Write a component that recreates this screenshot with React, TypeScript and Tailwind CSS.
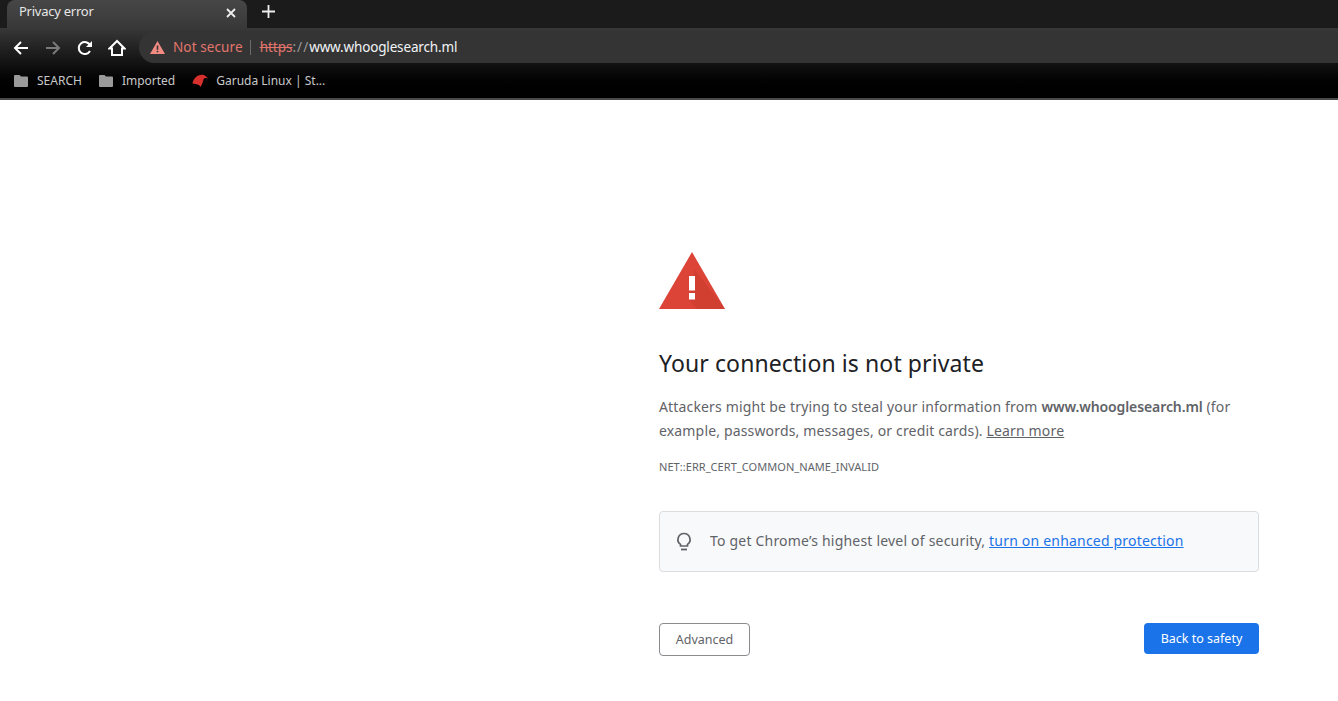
const font = "[font-family:'Noto_Sans',sans-serif]";

const Folder = () => (
  <svg width="16" height="16" viewBox="0 0 16 16" className="shrink-0">
    <path d="M2 2h4.500L8 3.500h6a1 1 0 0 1 1 1V13a1 1 0 0 1-1 1H2a1 1 0 0 1-1-1V3a1 1 0 0 1 1-1z" fill="#9a9a9a" />
  </svg>
);

const Garuda = () => (
  <svg width="16" height="14" viewBox="0 0 16 14" className="shrink-0">
    <path d="M0.500 9.500C1 6 3.500 2.500 7 1.200 9.500.3 12 .6 13.500 2L16 4.300l-2.600-.3c-1.100 0-1.600.6-1.900 1.600-.4 2.400-1.500 4.800-3 7.400-.5-1-1-1.700-1.800-2-2-.9-4-1.300-6.200-1.500z" fill="#d8302c" />
  </svg>
);

const Warning = () => (
  <svg width="66" height="57" viewBox="0 0 66 57">
    <path d="M33 0l33 57H0z" fill="#db4437" />
    <path d="M36 18l30 39H38L30 48z" fill="#c53929" opacity="0.45" />
    <path d="M30 24h6v14.500h-6zM30 41h6v6.500h-6z" fill="#ffffff" />
  </svg>
);

export default function App() {
  return (
    <div className={`${font} w-[1338px] h-[701px] overflow-hidden bg-white`}>
      <div className="h-[28px] bg-[#1b1b1b] flex items-end pl-[7px]">
        <div className="w-[240px] h-[28px] pb-[2px] rounded-t-[8px] bg-gradient-to-b from-[#474747] to-[#383838] flex items-center pl-[12px] pr-[11px] justify-between">
          <span className="mb-[2px] text-[13px] text-[#e6e6e6] tracking-[-0.25px]">Privacy error</span>
          <svg width="10" height="10" viewBox="0 0 10 10">
            <path d="M1 1l8 8M9 1L1 9" stroke="#eeeeee" strokeWidth="1.800" />
          </svg>
        </div>
        <div className="ml-[15px] mb-[10px]">
          <svg width="13" height="13" viewBox="0 0 13 13">
            <path d="M6.500 0v13M0 6.500h13" stroke="#eeeeee" strokeWidth="1.800" />
          </svg>
        </div>
      </div>
      <div className="h-[72px] bg-gradient-to-b from-[#383838] via-[#0c0c0c] via-[60%] to-black border-b-2 border-[#4a4a4a]">
        <div className="h-[37px] pt-[2px] flex items-center pl-[13px]">
          <svg width="16" height="16" viewBox="0 0 16 16">
            <path d="M15 8H2M8 2L2 8l6 6" fill="none" stroke="#ffffff" strokeWidth="2" />
          </svg>
          <svg width="16" height="16" viewBox="0 0 16 16" className="ml-[16px]">
            <path d="M1 8h13M8 2l6 6-6 6" fill="none" stroke="#7a7a7a" strokeWidth="2" />
          </svg>
          <svg width="16" height="16" viewBox="0 0 16 16" className="ml-[16px]">
            <path d="M13 11a6 6 0 1 1 .2-5.500" fill="none" stroke="#ffffff" strokeWidth="2" />
            <path d="M15 1v6H9z" fill="#ffffff" />
          </svg>
          <svg width="18" height="18" viewBox="0 0 18 18" className="ml-[15px]">
            <path d="M9 2L1.500 9.500H4V16h10V9.500h2.500z" fill="none" stroke="#ffffff" strokeWidth="2" />
          </svg>
          <div className="ml-[13px] flex-1 h-[31px] rounded-l-full bg-[#343434] flex items-center pl-[11px]">
            <svg width="15" height="13" viewBox="0 0 15 13">
              <path d="M7.500 0L15 13H0z" fill="#f28b82" />
              <path d="M6.700 4.500h1.600v4.300H6.700zM6.700 9.700h1.600v1.600H6.700z" fill="#343434" />
            </svg>
            <span className="ml-[8px] text-[13.500px] text-[#e2766c] tracking-[0.1px]">Not secure</span>
            <span className="ml-[7px] w-px h-[15px] bg-[#6a6a6a]" />
            <span className="ml-[9px] text-[13.500px] text-[#e2766c] line-through">https</span>
            <span className="text-[13.500px] text-[#9a9a9a] tracking-[1px]">://</span>
            <span className="text-[13.500px] text-[#f1f3f4] tracking-[-0.15px]">www.whooglesearch.ml</span>
          </div>
        </div>
        <div className="h-[31px] flex items-center pl-[13px] text-[12px] text-[#c8c8c8]">
          <Folder />
          <span className="ml-[8px]">SEARCH</span>
          <div className="ml-[16px]">
            <Folder />
          </div>
          <span className="ml-[8px]">Imported</span>
          <div className="ml-[17px]">
            <Garuda />
          </div>
          <span className="ml-[8px]">Garuda Linux | St...</span>
        </div>
      </div>
      <div className="ml-[659px] w-[600px] pt-[152px] text-[#5f6368]">
        <Warning />
        <h1 className="mt-[36px] text-[23px] leading-[36px] tracking-[0.1px] text-[#202124]">Your connection is not private</h1>
        <p className="mt-[14px] text-[14px] leading-[24px] tracking-[0.16px]">
          Attackers might be trying to steal your information from{" "}
          <strong className="font-semibold tracking-[-0.1px]">www.whooglesearch.ml</strong> (for example, passwords, messages, or credit
          cards). <a className="underline">Learn more</a>
        </p>
        <div className="mt-[16px] text-[11px] leading-[16px] tracking-[0.05px]">NET::ERR_CERT_COMMON_NAME_INVALID</div>
        <div className="mt-[36px] h-[61px] rounded-[4px] border border-[#dadce0] bg-[#f8f9fa] flex items-center pl-[15px]">
          <svg width="18" height="20" viewBox="0 0 18 20">
            <path
              d="M9 1.500a6 6 0 0 0-3.500 10.900V14h7v-1.600A6 6 0 0 0 9 1.500z"
              fill="none"
              stroke="#5f6368"
              strokeWidth="1.700"
            />
            <path d="M6 17.500h6" stroke="#5f6368" strokeWidth="1.800" />
          </svg>
          <span className="ml-[17px] mb-[2px] text-[14px] tracking-[0.2px]">
            To get Chrome’s highest level of security,{" "}
            <a className="text-[#1a73e8] underline">turn on enhanced protection</a>
          </span>
        </div>
        <div className="mt-[51px] flex justify-between items-start">
          <button className="w-[91px] h-[33px] pt-[2px] rounded-[4px] border border-[#8a8b8f] bg-white text-[12.500px] text-[#5f6368]">
            Advanced
          </button>
          <button className="w-[115px] h-[31px] pt-[2px] rounded-[4px] bg-[#1a73e8] text-[12.500px] text-white">
            Back to safety
          </button>
        </div>
      </div>
    </div>
  );
}
